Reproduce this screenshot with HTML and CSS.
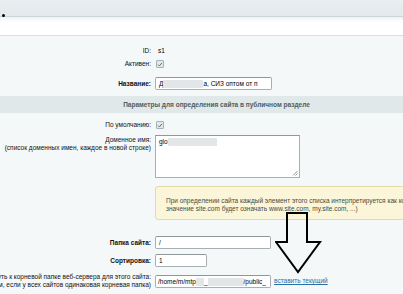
FILE: index.html
```html
<!DOCTYPE html>
<html lang="ru">
<head>
    <meta charset="UTF-8">
    <title>Настройки сайта</title>
    <link rel="stylesheet" href="styles.css">
</head>
<body>
    <div class="topbar"><span class="dot"></span></div>
    <div class="tabs"></div>

    <div class="panel">
        <div class="row row-id">
            <div class="label">ID:</div>
            <div class="field">s1</div>
        </div>
        <div class="row row-active">
            <div class="label">Активен:</div>
            <div class="field">
                <span class="check"><svg width="7" height="7" viewBox="0 0 7 7"><path d="M1.2 3.6 L2.8 5.2 L5.8 1.6" fill="none" stroke="#5c6b70" stroke-width="1.1"/></svg></span>
            </div>
        </div>
        <div class="row row-name">
            <div class="label bold">Название:</div>
            <div class="field">
                <div class="input input-name">Д<span class="blur blur-name"></span>а, СИЗ оптом от п</div>
            </div>
        </div>

        <div class="section-head">Параметры для определения сайта в публичном разделе</div>

        <div class="row row-default">
            <div class="label">По умолчанию:</div>
            <div class="field">
                <span class="check"><svg width="7" height="7" viewBox="0 0 7 7"><path d="M1.2 3.6 L2.8 5.2 L5.8 1.6" fill="none" stroke="#5c6b70" stroke-width="1.1"/></svg></span>
            </div>
        </div>
        <div class="row row-domain">
            <div class="label label-top"><div>Доменное имя:<br>(список доменных имен, каждое в новой строке)</div></div>
            <div class="field">
                <div class="textarea">glo<span class="blur blur-domain"></span>
                    <svg class="grip" width="6" height="6" viewBox="0 0 6 6"><path d="M5.5 1 L1 5.5 M5.5 3.5 L3.5 5.5" stroke="#777" stroke-width="0.8"/></svg>
                </div>
            </div>
        </div>
        <div class="row row-note">
            <div class="label"></div>
            <div class="field">
                <div class="note">При определении сайта каждый элемент этого списка интерпретируется как корневой домен (т.е.<br>значение site.com будет означать www.site.com, my.site.com, ...)</div>
            </div>
        </div>

        <div class="row row-folder">
            <div class="label bold">Папка сайта:</div>
            <div class="field"><div class="input input-folder">/</div></div>
        </div>
        <div class="row row-sort">
            <div class="label bold">Сортировка:</div>
            <div class="field"><div class="input input-sort">1</div></div>
        </div>
        <div class="row row-path">
            <div class="label"><div>Путь к корневой папке веб-сервера для этого сайта:<br>(оставьте пустым, если у всех сайтов одинаковая корневая папка)</div></div>
            <div class="field">
                <div class="input input-path">/home/m/mtp<span class="blur blur-p1"></span>_<span class="blur blur-p2"></span>/public_</div>
                <a href="#" class="link">вставить текущий</a>
            </div>
        </div>

        <svg class="arrow" width="48" height="64" viewBox="0 0 48 64">
            <path d="M12 2 L32 2 L32 31 L45 31 L23 61 L1 31 L12 31 Z" fill="none" stroke="#000" stroke-width="2" stroke-linejoin="miter"/>
        </svg>
    </div>
</body>
</html>
```

FILE: styles.css
```css
* {
    box-sizing: border-box;
}

body {
    margin: 0;
    width: 403px;
    height: 294px;
    overflow: hidden;
    font-family: "Liberation Sans", Arial, sans-serif;
    font-size: 6.5px;
    line-height: 8px;
    color: #000;
    background-color: #f5f8f9;
}

.topbar {
    position: relative;
    height: 17px;
    background: linear-gradient(#e9eef0, #e3e9ec);
    border-bottom: 1px solid #cdd5d8;
}

.dot {
    position: absolute;
    left: 2px;
    top: 14px;
    width: 3px;
    height: 3px;
    border-radius: 50%;
    background-color: #000;
}

.tabs {
    height: 19px;
    background: linear-gradient(#eef2f3, #ffffff 5px, #ffffff);
    border-bottom: 1px solid #d9dfe1;
}

.panel {
    position: relative;
    padding-top: 10px;
    height: 260px;
}

.row {
    display: flex;
    align-items: center;
}

.label {
    width: 155px;
    flex: none;
    padding-right: 4px;
    display: flex;
    justify-content: flex-end;
    text-align: right;
    white-space: nowrap;
    color: #111;
}

.label-top {
    align-self: flex-start;
    padding-top: 1px;
}

.bold {
    font-weight: bold;
}

.field {
    display: flex;
    align-items: center;
    flex: 1;
    min-width: 0;
}

.row-id {
    height: 10px;
}

.row-id .field {
    padding-left: 3px;
}

.row-active {
    height: 10px;
    margin-top: 3px;
}

.row-name {
    margin-top: 8px;
}

.check {
    display: inline-flex;
    width: 8px;
    height: 8px;
    margin-left: 1px;
    border: 1px solid #a8b2b6;
    border-radius: 1px;
    background-color: #e3e8ea;
    align-items: center;
    justify-content: center;
}

.input {
    height: 13px;
    padding: 0 3px;
    border: 1px solid #a7afb3;
    border-top-color: #8e979b;
    border-radius: 2px;
    background-color: #fff;
    line-height: 11px;
    white-space: nowrap;
    overflow: hidden;
}

.input-name {
    width: 117px;
}

.input-folder {
    width: 116px;
}

.input-sort {
    width: 52px;
}

.input-path {
    width: 116px;
    padding-left: 2px;
}

.blur {
    display: inline-block;
    vertical-align: middle;
    height: 8px;
    background-color: #e2e6e8;
    border-radius: 1px;
}

.blur-name {
    width: 40px;
}

.blur-domain {
    width: 49px;
    margin-top: -1px;
}

.blur-p1 {
    width: 8px;
}

.blur-p2 {
    width: 36px;
}

.section-head {
    margin-top: 6px;
    height: 17px;
    background-color: #e1e8ea;
    color: #4d5e63;
    text-align: center;
    line-height: 17px;
    padding-left: 30px;
    font-weight: bold;
}

.row-default {
    height: 10px;
    margin-top: 7px;
}

.row-domain {
    margin-top: 5px;
    align-items: flex-start;
}

.textarea {
    position: relative;
    width: 145px;
    height: 43px;
    padding: 2px 3px;
    border: 1px solid #a7afb3;
    border-top-color: #8e979b;
    background-color: #fff;
    line-height: 8px;
}

.grip {
    position: absolute;
    right: 1px;
    bottom: 1px;
}

.row-note {
    margin-top: 8px;
}

.note {
    flex: none;
    width: 320px;
    height: 34px;
    padding: 10px 0 0 10px;
    background-color: #fbf6d9;
    border: 1px solid #e3dba9;
    border-radius: 3px;
    color: #4a4a3a;
    white-space: nowrap;
    line-height: 8px;
}

.row-folder {
    margin-top: 16px;
}

.row-sort {
    margin-top: 5px;
}

.row-path {
    margin-top: 6px;
}

.link {
    margin-left: 3px;
    color: #2d6ea5;
    text-decoration: underline;
    white-space: nowrap;
}

.arrow {
    position: absolute;
    left: 275px;
    top: 175px;
}
```
